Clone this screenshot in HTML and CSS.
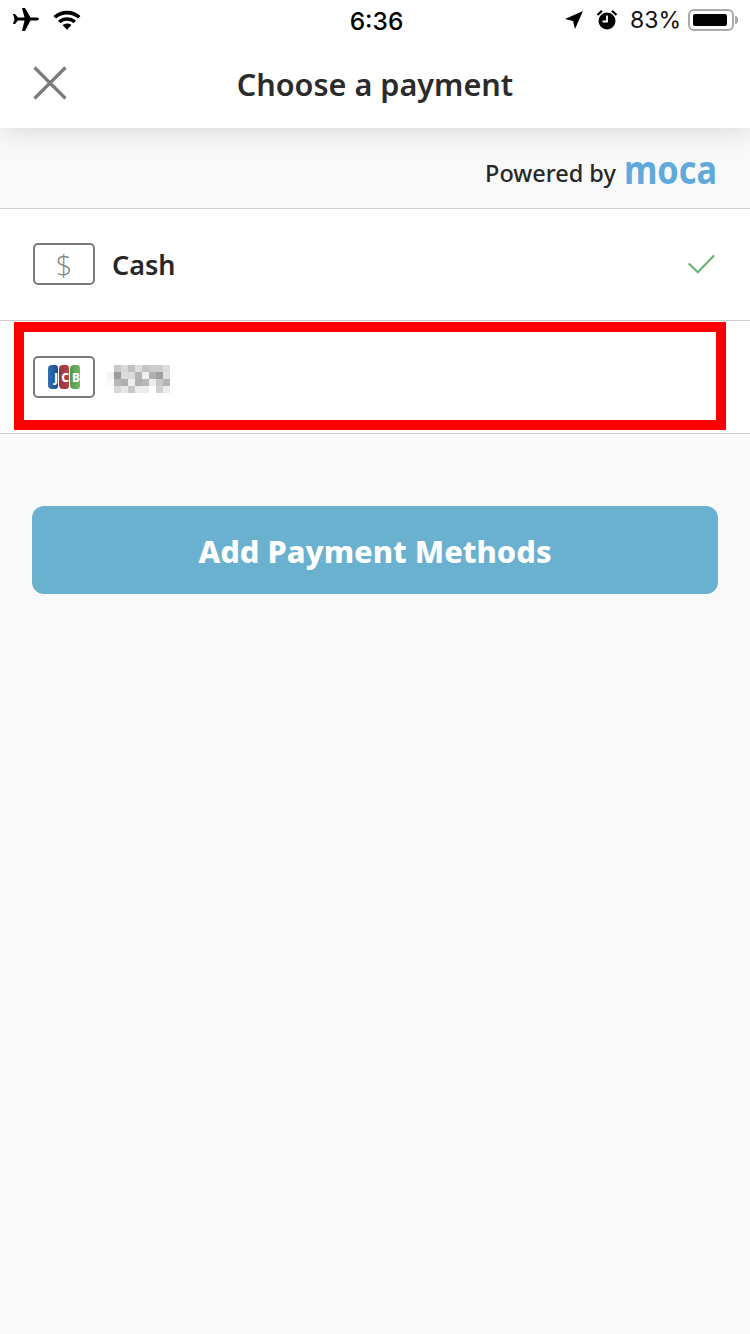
FILE: index.html
```html
<!DOCTYPE html>
<html>
<head>
    <meta charset="utf-8" />
    <title>Choose a payment</title>
    <link rel="stylesheet" href="styles.css">
</head>
<body>
    <div class="statusBar">
        <div class="statusSide">
            <svg class="planeIcon" viewBox="0 0 28 26" width="28" height="26"><path d="M10 1 L13 1 L18.5 10.500 L25 10.500 C27.500 10.500 27.500 13.500 25 13.500 L18.500 13.500 L13 24 L10 24 L12.500 13.500 L6 13.500 L3 17 L1 17 L2.500 12 L1 7 L3 7 L6 10.500 L12.500 10.500 Z" fill="#000"/></svg>
            <svg class="wifiIcon" viewBox="0 0 28 20" width="28" height="20"><path d="M0.500 6 C8 -1 20 -1 27.500 6 L25 8.600 C18.500 3 9.500 3 3 8.600 Z M5 10.600 C10.500 6 17.500 6 23 10.600 L20.400 13.200 C16.500 10 11.500 10 7.600 13.200 Z M9.500 15 C12.300 13 15.700 13 18.500 15 L14 19.800 Z" fill="#000"/></svg>
        </div>
        <div class="statusTime">6:36</div>
        <div class="statusSide statusRight">
            <svg viewBox="0 0 20 20" width="20" height="20"><path d="M19 1 L11 19 L9 11 L1 9 Z" fill="#000"/></svg>
            <svg class="alarmIcon" viewBox="0 0 22 22" width="22" height="22"><circle cx="11" cy="12" r="8.500" fill="#000"/><path d="M11 6.500 V12.500 H6.500" fill="none" stroke="#fff" stroke-width="1.800"/><path d="M1.500 6 L6 1.800 M20.500 6 L16 1.800" stroke="#000" stroke-width="2.200"/></svg>
            <span class="batteryPct">83%</span>
            <div class="batteryShell"><div class="batteryFill"></div></div>
            <div class="batteryNub"></div>
        </div>
    </div>

    <div class="navBar">
        <svg class="closeIcon" viewBox="0 0 34 34" width="34" height="34"><path d="M1.500 1.500 L32.500 32.500 M32.500 1.500 L1.500 32.500" stroke="#7b7b7b" stroke-width="3.200"/></svg>
        <h1 class="navTitle">Choose a payment</h1>
    </div>

    <div class="poweredBand">
        <span class="poweredText">Powered by</span>
        <span class="mocaLogo">moca</span>
    </div>

    <div class="payRow payRowCash">
        <div class="payBadge"><span class="dollar">$</span></div>
        <span class="payName">Cash</span>
        <svg class="checkIcon" viewBox="0 0 30 22" width="29" height="20"><path d="M1 10.500 L11 20 L29 1.500" fill="none" stroke="#66b573" stroke-width="2.400"/></svg>
    </div>

    <div class="payRow payRowCard">
        <div class="payBadge">
            <div class="jcbLogo">
                <span class="jcbBar jcbBlue">J</span>
                <span class="jcbBar jcbRed">C</span>
                <span class="jcbBar jcbGreen">B</span>
            </div>
        </div>
        <svg class="blurredNum" viewBox="0 0 63 28" width="63" height="28">
            <rect x="7" y="0" width="7" height="7" fill="#c8c8c8"/><rect x="14" y="0" width="7" height="7" fill="#d8d8d8"/><rect x="21" y="0" width="7" height="7" fill="#c0c0c0"/><rect x="28" y="0" width="7" height="7" fill="#dddddd"/><rect x="35" y="0" width="7" height="7" fill="#c4c4c4"/><rect x="42" y="0" width="7" height="7" fill="#cccccc"/><rect x="49" y="0" width="7" height="7" fill="#cccccc"/><rect x="56" y="0" width="7" height="7" fill="#dcdcdc"/>
            <rect x="0" y="7" width="7" height="7" fill="#f4f4f4"/><rect x="7" y="7" width="7" height="7" fill="#9c9c9c"/><rect x="14" y="7" width="7" height="7" fill="#dcdcdc"/><rect x="21" y="7" width="7" height="7" fill="#dcdcdc"/><rect x="28" y="7" width="7" height="7" fill="#b4b4b4"/><rect x="35" y="7" width="7" height="7" fill="#f0f0f0"/><rect x="42" y="7" width="7" height="7" fill="#b0b0b0"/><rect x="49" y="7" width="7" height="7" fill="#a0a0a0"/><rect x="56" y="7" width="7" height="7" fill="#e0e0e0"/>
            <rect x="0" y="14" width="7" height="7" fill="#fafafa"/><rect x="7" y="14" width="7" height="7" fill="#b8b8b8"/><rect x="14" y="14" width="7" height="7" fill="#b0b0b0"/><rect x="21" y="14" width="7" height="7" fill="#eeeeee"/><rect x="28" y="14" width="7" height="7" fill="#b0b0b0"/><rect x="35" y="14" width="7" height="7" fill="#b8b8b8"/><rect x="42" y="14" width="7" height="7" fill="#ececec"/><rect x="49" y="14" width="7" height="7" fill="#c8c8c8"/><rect x="56" y="14" width="7" height="7" fill="#b4b4b4"/>
            <rect x="7" y="21" width="7" height="7" fill="#d8d8d8"/><rect x="14" y="21" width="7" height="7" fill="#e8e8e8"/><rect x="21" y="21" width="7" height="7" fill="#c8c8c8"/><rect x="28" y="21" width="7" height="7" fill="#ececec"/><rect x="35" y="21" width="7" height="7" fill="#ececec"/><rect x="49" y="21" width="7" height="7" fill="#d0d0d0"/><rect x="56" y="21" width="7" height="7" fill="#ececec"/>
        </svg>
        <!-- highlight drawn over the card row -->
        <div class="highlightBox"></div>
    </div>

    <div class="actions">
        <button class="addButton">Add Payment Methods</button>
    </div>
</body>
</html>
```

FILE: styles.css
```css
html, body
{
    margin:0;
    padding:0;
}
body
{
    width:750px;
    height:1334px;
    overflow:hidden;
    background-color:#f9f9f9;
    font-family:"Noto Sans", "Open Sans", sans-serif;
    color:#272727;
}

/* status bar */
.statusBar
{
    height:40px;
    padding:0 12px;
    display:flex;
    align-items:center;
    justify-content:space-between;
    background-color:#fff;
    position:relative;
    z-index:1;
}
.statusSide
{
    display:flex;
    align-items:center;
    gap:13px;
}
.statusRight
{
    gap:0;
}
.statusTime
{
    position:absolute;
    left:3px;
    right:0;
    padding-top:2px;
    text-align:center;
    font-family:Inter, "Liberation Sans", sans-serif;
    font-size:24.5px;
    font-weight:500;
    color:#000;
}
.alarmIcon
{
    margin-left:12px;
}
.batteryPct
{
    margin-left:12px;
    font-family:Inter, "Liberation Sans", sans-serif;
    font-size:23px;
    color:#111;
}
.batteryShell
{
    box-sizing:border-box;
    width:46px;
    height:22px;
    margin-left:7px;
    padding:3px;
    border:2px solid #a9a9a9;
    border-radius:6px;
}
.batteryFill
{
    width:34px;
    height:100%;
    background-color:#000;
    border-radius:2px;
}
.batteryNub
{
    width:3px;
    height:8px;
    margin-left:1px;
    background-color:#a9a9a9;
    border-radius:0 3px 3px 0;
}

/* nav */
.navBar
{
    height:88px;
    position:relative;
    display:flex;
    align-items:center;
    justify-content:center;
    background-color:#fff;
    box-shadow:0 4px 24px rgba(0,0,0,0.12);
}
.closeIcon
{
    position:absolute;
    left:33px;
    top:26px;
}
.navTitle
{
    margin:0;
    font-size:30.600px;
    font-weight:600;
    color:#2b2b2b;
}

/* powered by */
.poweredBand
{
    box-sizing:border-box;
    height:80px;
    padding:10px 33px 0 0;
    display:flex;
    align-items:center;
    justify-content:flex-end;
    gap:8px;
}
.poweredText
{
    font-size:23.500px;
    font-weight:500;
}
.mocaLogo
{
    font-size:34.300px;
    font-weight:700;
    line-height:40px;
    color:#5fa9dd;
    margin-top:-8px;
    transform:scaleY(1.140);
}

/* rows */
.payRow
{
    box-sizing:border-box;
    height:112px;
    padding:0 32px 0 33px;
    display:flex;
    align-items:center;
    background-color:#fff;
    border-top:1px solid #cecece;
    position:relative;
}
.payRowCash
{
    padding-bottom:1px;
}
.payRowCard
{
    height:114px;
    border-bottom:1px solid #cecece;
}
.payBadge
{
    box-sizing:border-box;
    width:62px;
    height:42px;
    display:flex;
    align-items:center;
    justify-content:center;
    border:2px solid #7b7b7b;
    border-radius:5px;
    background-color:#fff;
}
.dollar
{
    font-family:"Open Sans", sans-serif;
    font-size:29px;
    color:#808080;
    font-weight:300;
}
.payName
{
    margin-left:17px;
    font-size:27px;
    font-weight:600;
}
.checkIcon
{
    margin-left:auto;
    margin-right:2px;
}
.jcbLogo
{
    display:flex;
    gap:1px;
    width:32px;
    height:24px;
}
.jcbBar
{
    flex:1;
    border-radius:4px 3px 3px 4px;
    color:#fff;
    font-size:12px;
    font-weight:800;
    line-height:25px;
    text-align:right;
}
.jcbBlue
{
    background:linear-gradient(to right, #2f6fb0, #1f4d8c);
}
.jcbRed
{
    background:linear-gradient(to right, #8f3a44, #bb3f48);
}
.jcbGreen
{
    background:linear-gradient(to right, #4f9a4c, #76b563);
}
.blurredNum
{
    margin-left:12px;
    margin-top:4px;
}
.highlightBox
{
    position:absolute;
    left:14px;
    top:1px;
    box-sizing:border-box;
    width:712px;
    height:108px;
    border:10px solid #ff0000;
}

/* button */
.actions
{
    padding:72px 32px 0 32px;
}
.addButton
{
    display:block;
    width:686px;
    height:88px;
    padding:2px 0 0 0;
    border:0;
    border-radius:12px;
    background-color:#6ab0cf;
    color:#fff;
    font-family:inherit;
    font-size:30.800px;
    font-weight:800;
}
```
